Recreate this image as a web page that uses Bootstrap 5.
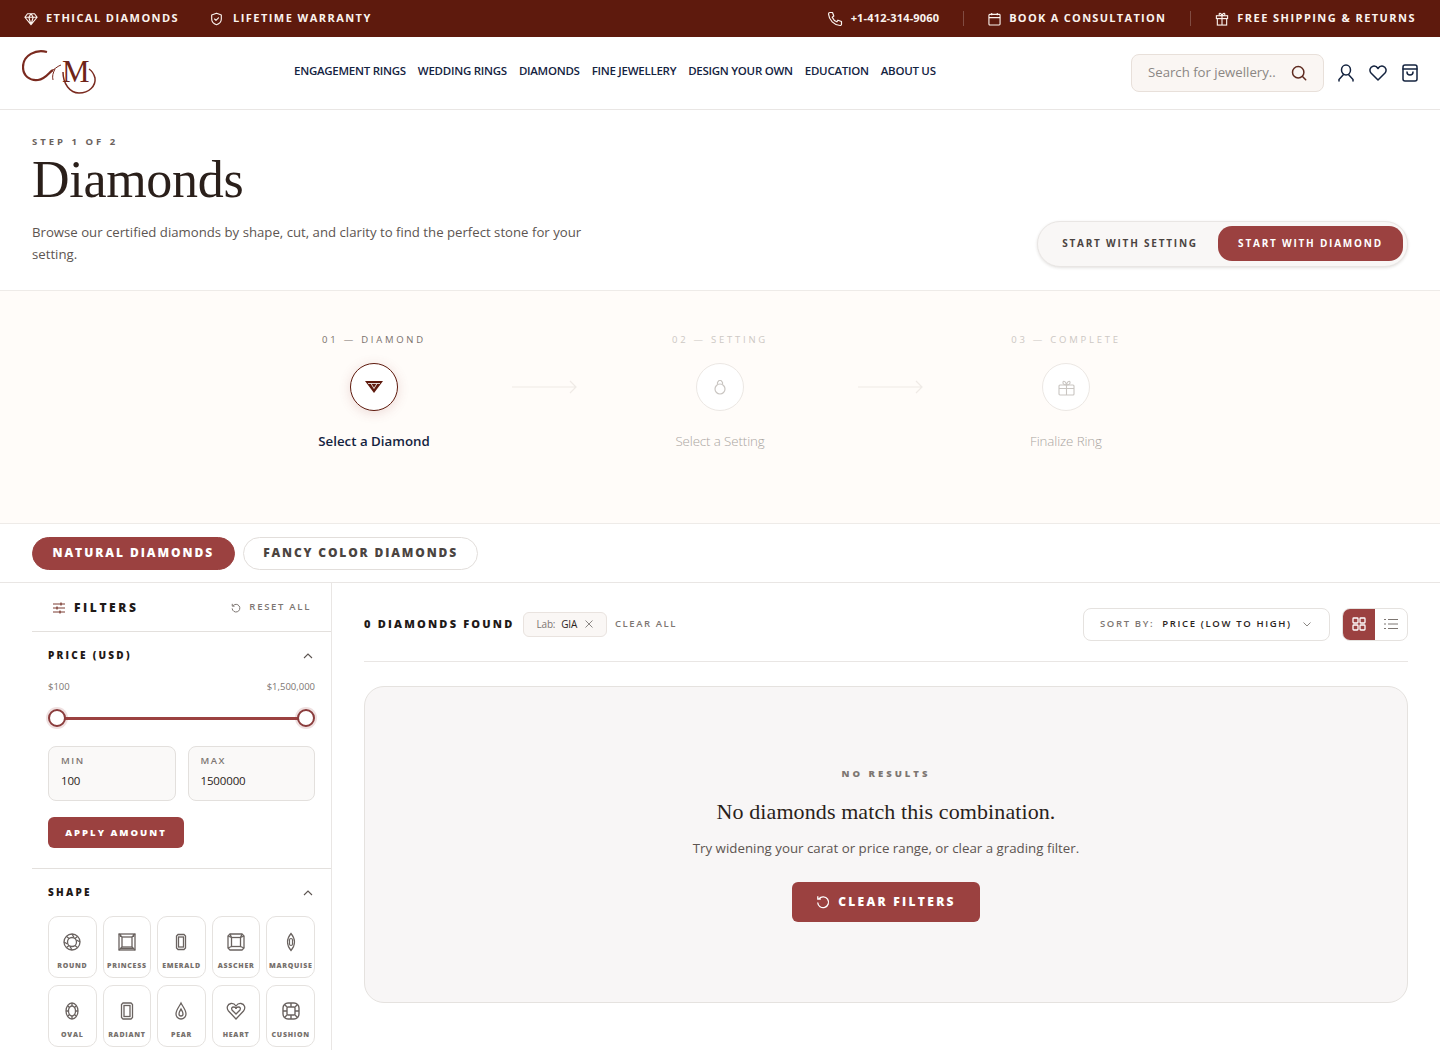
<!DOCTYPE html>
<html lang="en">
<head>
  <meta charset="UTF-8">
  <meta name="viewport" content="width=device-width, initial-scale=1.0">
  <title>Diamonds</title>
  <link href="https://cdn.jsdelivr.net/npm/bootstrap@5.3.0/dist/css/bootstrap.min.css" rel="stylesheet">
  <style>
    body {
      font-family: "Open Sans", "Noto Sans", sans-serif;
      color: #2a2320;
      background: #fff;
      height: 1050px;
      overflow: hidden;
    }
    svg { display: block; flex: none; }
    .top-strip {
      height: 37px;
      background: #5e1a0d;
      color: #fbf3ee;
      padding: 0 24px 0 24px;
      font-size: 11px;
      font-weight: 700;
      letter-spacing: 1.45px;
    }
    .top-strip .strip-phone { font-size: 11px; letter-spacing: .16px; font-weight: 700; }
    .top-strip .strip-book { letter-spacing: 1.3px; }
    .strip-gap { margin-left: 29px; }
    .strip-sep { width: 1px; height: 15px; background: rgba(255,255,255,.22); }
    .site-head {
      height: 73px;
      border-bottom: 1px solid #e9e6e4;
      padding: 0 22px;
    }
    .head-nav {
      left: 294px;
      top: 25px;
      gap: 12px;
    }
    .head-nav a {
      color: #14233f;
      font-size: 11.5px;
      font-weight: 600;
      letter-spacing: -.27px;
      text-decoration: none;
      white-space: nowrap;
    }
    .head-search {
      width: 193px;
      height: 38px;
      background: #faf6f3;
      border: 1px solid #e8e0da;
      border-radius: 8px;
      padding: 0 16px;
      color: #8b8784;
      font-size: 13.2px;
      margin-right: 14px;
    }
    .head-gap { margin-left: 15px; }
    .hero-band { height: 181px; padding: 26px 32px 0; border-bottom: 1px solid #eeebe8; }
    .step-label { font-size: 9.5px; font-weight: 700; letter-spacing: 3px; color: #6b625d; line-height: 12px; }
    .hero-title {
      font-family: "Liberation Serif", serif;
      font-size: 52px;
      font-weight: 400;
      line-height: 60px;
      letter-spacing: -.3px;
      color: #2a1f1a;
      margin: 2px 0 0;
    }
    .hero-copy { width: 570px; font-size: 13.2px; line-height: 22px; color: #5d5551; margin: 11px 0 0; }
    .start-switch {
      right: 32px;
      top: 111px;
      width: 371px;
      height: 46px;
      background: #f9f7f6;
      border: 1px solid #e9e6e4;
      border-radius: 23px;
      box-shadow: 0 1px 3px rgba(60,40,30,.14);
      padding: 0 4px 1px;
      font-size: 10px;
      font-weight: 700;
      letter-spacing: 1.78px;
    }
    .start-switch .switch-off { width: 176px; text-align: center; color: #4b4441; }
    .start-switch .switch-on {
      width: 185px;
      height: 35px;
      line-height: 35px;
      text-align: center;
      background: #9b4140;
      color: #fff;
      border-radius: 14px;
    }
    .stepper-band { height: 233px; background: #fffcf9; border-bottom: 1px solid #eeebe8; padding-top: 43px; }
    .stepper-row { margin-left: 304px; width: 840px; }
    .step-cell { width: 140px; flex: none; text-align: center; }
    .step-num { font-size: 9.5px; letter-spacing: 2.75px; color: #7a716c; line-height: 12px; white-space: nowrap; }
    .step-dot {
      width: 48px;
      height: 48px;
      border-radius: 50%;
      margin: 17px auto 20px;
      border: 1px solid #ece8e4;
      background: #fff;
    }
    .step-name { font-size: 13.3px; line-height: 20px; letter-spacing: -.1px; font-weight: 300; color: #aaa5a1; white-space: nowrap; }
    .step-cell.is-on .step-dot { border-color: #5e1a0d; box-shadow: 0 2px 12px rgba(155,65,64,.18); }
    .step-cell.is-on .step-name { color: #14233f; font-weight: 600; letter-spacing: 0; }
    .step-cell.is-off .step-num { color: #cdc8c4; }
    .step-arrow { width: 206px; flex: none; margin-top: 46px; padding-left: 68px; }
    .tabs-band { height: 59px; border-bottom: 1px solid #e9e6e4; padding: 0 32px; gap: 8px; }
    .pill-tab {
      height: 33px;
      line-height: 30px;
      padding: 0 19.5px;
      border-radius: 17px;
      border: 1px solid #e2dedb;
      font-size: 12px;
      font-weight: 800;
      letter-spacing: 1.95px;
      color: #4b4441;
    }
    .pill-tab.is-on { background: #9b4140; border-color: #9b4140; color: #fff; }
    .pill-tab.pill-fancy { letter-spacing: 1.85px; }
    .filter-col { width: 332px; padding-left: 32px; border-right: 1px solid #e9e6e4; flex: none; height: 468px; overflow: hidden; }
    .filter-head { height: 49px; padding: 1px 20px 0 20px; border-bottom: 1px solid #e3e0dd; }
    .filter-title { font-size: 12px; font-weight: 800; letter-spacing: 2.6px; color: #1f1a18; }
    .filter-reset { font-size: 9.5px; font-weight: 600; letter-spacing: 1.7px; color: #7d7672; }
    .filter-block { padding: 0 16px; border-bottom: 1px solid #e3e0dd; }
    .block-head { padding: 16px 2px 0 0; }
    .block-label { font-size: 10px; font-weight: 800; letter-spacing: 2.25px; color: #1f1a18; }
    .price-ends { font-size: 9.5px; color: #7d7672; margin-top: 17px; line-height: 13px; }
    .range-line { height: 3px; margin: 24px 9px 0; background: #9b4140; }
    .range-knob {
      width: 18px;
      height: 18px;
      border-radius: 50%;
      background: #fff;
      border: 2px solid #8a3c3c;
      box-shadow: 0 0 0 2px rgba(155,65,64,.16);
      top: -8px;
    }
    .range-knob.knob-min { left: -9px; }
    .range-knob.knob-max { right: -9px; }
    .range-pair { margin-top: 26px; gap: 12px; }
    .range-box {
      height: 55px;
      background: #faf9f8;
      border: 1px solid #e3e0dd;
      border-radius: 8px;
      padding: 8px 12px 0;
    }
    .range-box span { display: block; font-size: 9.5px; font-weight: 600; letter-spacing: 1.5px; color: #7d7672; line-height: 12px; }
    .range-box b { display: block; font-weight: 400; font-size: 11.5px; letter-spacing: -.15px; line-height: 18px; margin-top: 5px; color: #2a2320; }
    .apply-btn {
      width: 136px;
      height: 31px;
      line-height: 31px;
      margin: 16px 0 20px;
      text-align: center;
      background: #9b4140;
      color: #fff;
      border-radius: 6px;
      font-size: 9.5px;
      font-weight: 800;
      letter-spacing: 2px;
    }
    .shape-head { margin-bottom: 16px; }
    .shape-grid { display: grid; grid-template-columns: repeat(5, 1fr); gap: 7px 6px; }
    .shape-tile {
      height: 62px;
      border: 1px solid #e5e2df;
      border-radius: 10px;
      background: #fff;
      text-align: center;
      padding-top: 15px;
      overflow: hidden;
    }
    .shape-tile svg { margin: 0 auto; }
    .shape-tile span { display: block; margin-top: 9px; font-size: 7px; font-weight: 800; letter-spacing: .72px; color: #76706c; line-height: 9px; white-space: nowrap; }
    .result-col { padding: 0 32px; }
    .result-bar { height: 79px; padding-top: 4px; border-bottom: 1px solid #e9e6e4; }
    .found-text { font-size: 11px; font-weight: 800; letter-spacing: 2.2px; color: #1f1a18; white-space: nowrap; }
    .lab-chip {
      height: 25px;
      border: 1px solid #e9e3df;
      background: #faf7f5;
      border-radius: 6px;
      padding: 0 13px;
      font-size: 10px;
      letter-spacing: -.2px;
      color: #2a2320;
      margin: 0 8px 0 8px;
    }
    .lab-chip i { font-style: normal; color: #7d7672; margin-right: 6px; }
    .clear-link { font-size: 9.5px; font-weight: 600; letter-spacing: 1.55px; color: #7d7672; }
    .sort-box {
      width: 247px;
      height: 33px;
      border: 1px solid #e5e2df;
      border-radius: 8px;
      padding: 0 18px 0 16px;
      font-size: 9.5px;
      font-weight: 600;
      letter-spacing: 1.65px;
      color: #2a2320;
      white-space: nowrap;
    }
    .sort-box i { font-style: normal; color: #7d7672; margin-right: 8px; }
    .view-switch { width: 66px; height: 33px; border: 1px solid #e5e2df; border-radius: 8px; margin-left: 12px; overflow: hidden; }
    .view-switch div { width: 32px; height: 100%; }
    .view-switch .view-on { background: #9b4140; }
    .empty-box {
      height: 317px;
      margin-top: 24px;
      background: #f8f6f6;
      border: 1px solid #e5e2df;
      border-radius: 20px;
      padding-top: 80px;
      text-align: center;
    }
    .empty-tag { font-size: 9.5px; font-weight: 800; letter-spacing: 3px; color: #7d7672; line-height: 14px; }
    .empty-title { font-family: "Liberation Serif", serif; font-size: 22px; letter-spacing: .1px; line-height: 28px; color: #2a1f1a; font-weight: 400; margin: 17px 0 0; }
    .empty-copy { font-size: 13.3px; line-height: 20px; color: #5d5551; margin: 12px 0 0; }
    .clear-btn {
      width: 188px;
      height: 40px;
      margin: 24px auto 0;
      background: #9b4140;
      color: #fff;
      border-radius: 6px;
      font-size: 12px;
      font-weight: 800;
      letter-spacing: 2.3px;
    }
  </style>
</head>
<body>
  <div class="top-strip d-flex align-items-center justify-content-between">
    <div class="d-flex align-items-center">
      <svg width="14" height="14" viewBox="0 0 16 16" fill="none" stroke="#fbf3ee" stroke-width="1.3" stroke-linejoin="round"><path d="M4 2h8l3 4-7 8.500L1 6zM1 6h14M5.500 6 8 14.500 10.500 6 8 2 5.500 6"/></svg>
      <span class="ms-2">ETHICAL DIAMONDS</span>
      <svg class="strip-gap" width="17" height="14" viewBox="0 0 16 16" fill="none" stroke="#fbf3ee" stroke-width="1.3" stroke-linejoin="round" stroke-linecap="round"><path d="M8 1.500 13.500 3.500V8c0 3.300-2.400 5.500-5.500 6.500C4.900 13.500 2.500 11.300 2.500 8V3.500zM5.800 8l1.600 1.600 2.900-3"/></svg>
      <span class="ms-2">LIFETIME WARRANTY</span>
    </div>
    <div class="d-flex align-items-center">
      <svg width="16" height="16" viewBox="0 0 16 16" fill="none" stroke="#fbf3ee" stroke-width="1.2" stroke-linejoin="round"><path d="M3 1.500 5.500 1.500 6.800 5 5.200 6.200C6 8 7.700 10 9.800 10.800L11 9.200 14.500 10.500V13C14.500 14 13.800 14.600 13 14.500 7 14 2 9 1.500 3 1.500 2.200 2.200 1.500 3 1.500Z"/></svg>
      <span class="strip-phone ms-2">+1-412-314-9060</span>
      <div class="strip-sep mx-4"></div>
      <svg width="13" height="14" viewBox="0 0 14 15" fill="none" stroke="#fbf3ee" stroke-width="1.2"><rect x="1" y="2.500" width="12" height="11.500" rx="1"/><path d="M1 6h12M4 1v2.500M10 1v2.500"/></svg>
      <span class="strip-book ms-2">BOOK A CONSULTATION</span>
      <div class="strip-sep mx-4"></div>
      <svg width="14" height="14" viewBox="0 0 14 15" fill="none" stroke="#fbf3ee" stroke-width="1.2"><rect x="1" y="4" width="12" height="3"/><rect x="2" y="7" width="10" height="7"/><path d="M7 4v10M7 4C5 4 3.500 3 4 1.800 4.600.6 6.500 1.500 7 4ZM7 4c2 0 3.500-1 3-2.200C9.400.6 7.500 1.500 7 4Z"/></svg>
      <span class="ms-2">FREE SHIPPING &amp; RETURNS</span>
    </div>
  </div>

  <div class="site-head d-flex align-items-center justify-content-between position-relative">
    <svg width="76" height="46" viewBox="0 0 76 46" fill="none">
      <path d="M25 2C14 -1 1 5 1 17 1 26 8 31 16 30 24 29 27 22 31 20" stroke="#7a2a1f" stroke-width="2.200"/>
      <path d="M31 20C34 18 36 16 39 15M33 19C31 23 30 26 31 30" stroke="#7a2a1f" stroke-width="1"/>
      <path d="M41 22C41 34 48 43 57 43 67 43 74 36 73 28 72 24 70 21 67 19" stroke="#7a2a1f" stroke-width="1.500"/>
      <text x="40" y="32" font-family="Liberation Serif, serif" font-size="31" fill="#6e2418">M</text>
    </svg>
    <nav class="head-nav d-flex position-absolute">
      <a href="#">ENGAGEMENT RINGS</a><a href="#">WEDDING RINGS</a><a href="#">DIAMONDS</a><a href="#">FINE JEWELLERY</a><a href="#">DESIGN YOUR OWN</a><a href="#">EDUCATION</a><a href="#">ABOUT US</a>
    </nav>
    <div class="d-flex align-items-center">
      <div class="head-search d-flex align-items-center justify-content-between">
        <span>Search for jewellery..</span>
        <svg width="16" height="16" viewBox="0 0 16 16" fill="none" stroke="#5e2a1f" stroke-width="1.500" stroke-linecap="round"><circle cx="7.200" cy="7.200" r="5.700"/><path d="m11.500 11.500 3.200 3.200"/></svg>
      </div>
      <svg width="16" height="18" viewBox="0 0 16 18" fill="none" stroke="#14233f" stroke-width="1.500" stroke-linecap="round"><ellipse cx="8" cy="6" rx="4.500" ry="5"/><path d="M5.500 10.500 1 15.500V17M10.500 10.500 15 15.500V17"/></svg>
      <svg class="head-gap" width="18" height="16" viewBox="0 0 18 16" fill="none" stroke="#14233f" stroke-width="1.500" stroke-linejoin="round"><path d="M9 15 2 8C0 5.500 1 2 4 1.200 6 .8 8 1.800 9 3.500 10 1.800 12 .8 14 1.200 17 2 18 5.500 16 8Z"/></svg>
      <svg class="head-gap" width="16" height="18" viewBox="0 0 16 18" fill="none" stroke="#14233f" stroke-width="1.500" stroke-linecap="round"><rect x="1" y="1" width="14" height="16" rx="2"/><path d="M1 5h14M5 8c0 4 6 4 6 0"/></svg>
    </div>
  </div>

  <div class="hero-band position-relative">
    <div class="step-label">STEP 1 OF 2</div>
    <h1 class="hero-title">Diamonds</h1>
    <p class="hero-copy">Browse our certified diamonds by shape, cut, and clarity to find the perfect stone for your setting.</p>
    <div class="start-switch d-flex align-items-center position-absolute">
      <div class="switch-off">START WITH SETTING</div>
      <div class="switch-on">START WITH DIAMOND</div>
    </div>
  </div>

  <div class="stepper-band">
    <div class="stepper-row d-flex">
      <div class="step-cell is-on">
        <div class="step-num">01 — DIAMOND</div>
        <div class="step-dot d-flex align-items-center justify-content-center">
          <svg width="20" height="14" viewBox="0 0 20 14"><path d="M1 1h18L10 13z" fill="#5e1a0d"/><path d="M4 3.500h12M7 3.500l3 5 3-5" stroke="#fff" stroke-width=".8" fill="none"/></svg>
        </div>
        <div class="step-name">Select a Diamond</div>
      </div>
      <div class="step-arrow">
        <svg width="65" height="14" viewBox="0 0 65 14" fill="none" stroke="#efeae6" stroke-width="1.200"><path d="M0 7h63M58 1l6 6-6 6"/></svg>
      </div>
      <div class="step-cell is-off">
        <div class="step-num">02 — SETTING</div>
        <div class="step-dot d-flex align-items-center justify-content-center">
          <svg width="12" height="16" viewBox="0 0 12 16" fill="none" stroke="#c9c5c1" stroke-width="1.200"><circle cx="6" cy="10" r="5"/><path d="M3.500 5.500V3.500L5 1.500h2l1.500 2v2"/></svg>
        </div>
        <div class="step-name">Select a Setting</div>
      </div>
      <div class="step-arrow">
        <svg width="65" height="14" viewBox="0 0 65 14" fill="none" stroke="#efeae6" stroke-width="1.200"><path d="M0 7h63M58 1l6 6-6 6"/></svg>
      </div>
      <div class="step-cell is-off">
        <div class="step-num">03 — COMPLETE</div>
        <div class="step-dot d-flex align-items-center justify-content-center">
          <svg width="17" height="17" viewBox="0 0 17 17" fill="none" stroke="#c9c5c1" stroke-width="1.100"><rect x="1" y="6" width="15" height="10" rx="1"/><path d="M1 9.500h15M8.500 6v10M8.500 6C6 6 4.500 4.500 5 3 5.800 1.200 8 3 8.500 6ZM8.500 6C11 6 12.500 4.500 12 3 11.200 1.200 9 3 8.500 6Z"/></svg>
        </div>
        <div class="step-name">Finalize Ring</div>
      </div>
    </div>
  </div>

  <div class="tabs-band d-flex align-items-center">
    <div class="pill-tab is-on">NATURAL DIAMONDS</div>
    <div class="pill-tab pill-fancy">FANCY COLOR DIAMONDS</div>
  </div>

  <div class="d-flex">
    <aside class="filter-col">
      <div class="filter-head d-flex align-items-center justify-content-between">
        <div class="d-flex align-items-center">
          <svg width="14" height="12" viewBox="0 0 14 12" fill="none" stroke="#7a3a30" stroke-width="1"><path d="M1 2h12M1 6h12M1 10h12"/><path d="M9 .5v3M5 4.500v3M8 8.500v3" stroke-width="1.300"/></svg>
          <span class="filter-title ms-2">FILTERS</span>
        </div>
        <div class="filter-reset d-flex align-items-center">
          <svg class="me-2" width="10" height="10" viewBox="0 0 12 12" fill="none" stroke="#7d7672" stroke-width="1.200"><path d="M2.500 3.200A4.600 4.600 0 1 1 1.400 6.500M1.500 1v2.800h2.800"/></svg>
          RESET ALL
        </div>
      </div>

      <div class="filter-block">
        <div class="block-head d-flex align-items-center justify-content-between">
          <span class="block-label">PRICE (USD)</span>
          <svg width="10" height="6" viewBox="0 0 10 6" fill="none" stroke="#5d5551" stroke-width="1.100"><path d="m1 5 4-4 4 4"/></svg>
        </div>
        <div class="price-ends d-flex justify-content-between"><span>$100</span><span>$1,500,000</span></div>
        <div class="range-line position-relative">
          <div class="range-knob knob-min position-absolute"></div>
          <div class="range-knob knob-max position-absolute"></div>
        </div>
        <div class="range-pair d-flex">
          <div class="range-box w-50"><span>MIN</span><b>100</b></div>
          <div class="range-box w-50"><span>MAX</span><b>1500000</b></div>
        </div>
        <div class="apply-btn">APPLY AMOUNT</div>
      </div>

      <div class="filter-block border-0">
        <div class="block-head shape-head d-flex align-items-center justify-content-between">
          <span class="block-label">SHAPE</span>
          <svg width="10" height="6" viewBox="0 0 10 6" fill="none" stroke="#5d5551" stroke-width="1.100"><path d="m1 5 4-4 4 4"/></svg>
        </div>
        <div class="shape-grid">
          <div class="shape-tile"><svg width="20" height="20" viewBox="0 0 20 20" fill="none" stroke="#6a6360" stroke-width="1.300"><circle cx="10" cy="10" r="8"/><circle cx="10" cy="10" r="4.500"/><path d="M10 2 12 5.500M18 10 14.500 8M10 18 8 14.500M2 10 5.500 12M4.300 4.300 7 6.500M15.700 4.300 13 6.500M15.700 15.700 13 13.500M4.300 15.700 7 13.500"/></svg><span>ROUND</span></div>
          <div class="shape-tile"><svg width="20" height="20" viewBox="0 0 20 20" fill="none" stroke="#6a6360" stroke-width="1.300"><rect x="2" y="2" width="16" height="16"/><rect x="5" y="5" width="10" height="10"/><path d="M2 2l3 3M18 2l-3 3M2 18l3-3M18 18l-3-3M3.500 2v3M16.500 2v3M3 16.500h14"/></svg><span>PRINCESS</span></div>
          <div class="shape-tile"><svg width="20" height="20" viewBox="0 0 20 20" fill="none" stroke="#6a6360" stroke-width="1.300"><path d="M7 2.500h6l1.500 1.500v12L13 17.500H7L5.500 16V4z"/><rect x="7.500" y="5" width="5" height="10"/></svg><span>EMERALD</span></div>
          <div class="shape-tile"><svg width="20" height="20" viewBox="0 0 20 20" fill="none" stroke="#6a6360" stroke-width="1.300"><path d="M4 2h12l2 2v12l-2 2H4l-2-2V4z"/><rect x="5.500" y="5.500" width="9" height="9"/><path d="M2 4l3.500 1.500M18 4l-3.500 1.500M2 16l3.500-1.500M18 16l-3.500-1.500M4 2 5.500 5.500M16 2l-1.500 3.500"/></svg><span>ASSCHER</span></div>
          <div class="shape-tile"><svg width="20" height="20" viewBox="0 0 20 20" fill="none" stroke="#6a6360" stroke-width="1.200"><path d="M10 1.500C13 5 13.500 7 13.500 10S13 15 10 18.500C7 15 6.500 13 6.500 10S7 5 10 1.500Z"/><rect x="8.500" y="6.500" width="3" height="7" rx="1.500"/></svg><span>MARQUISE</span></div>
          <div class="shape-tile"><svg width="20" height="20" viewBox="0 0 20 20" fill="none" stroke="#6a6360" stroke-width="1.300"><ellipse cx="10" cy="10" rx="6" ry="8"/><ellipse cx="10" cy="10" rx="3.500" ry="5"/><path d="M10 2v3M10 15v3M4 10h2.500M13.500 10H16M6 5l2 2M14 5l-2 2M6 15l2-2M14 15l-2-2"/></svg><span>OVAL</span></div>
          <div class="shape-tile"><svg width="20" height="20" viewBox="0 0 20 20" fill="none" stroke="#6a6360" stroke-width="1.300"><path d="M6 2h8l1.500 1.500v13L14 18H6l-1.500-1.500v-13z"/><rect x="7" y="4.500" width="6" height="11"/></svg><span>RADIANT</span></div>
          <div class="shape-tile"><svg width="20" height="20" viewBox="0 0 20 20" fill="none" stroke="#6a6360" stroke-width="1.300"><path d="M10 2C12 6 15 9 15 13A5 5 0 0 1 5 13C5 9 8 6 10 2Z"/><path d="M10 8c1 2 2 3 2 5a2 2 0 0 1-4 0c0-2 1-3 2-5Z"/></svg><span>PEAR</span></div>
          <div class="shape-tile"><svg width="20" height="20" viewBox="0 0 20 20" fill="none" stroke="#6a6360" stroke-width="1.300"><path d="M10 18 2.500 10C0 7 1.500 3 5 2.500 7.500 2.200 9 3.500 10 5 11 3.500 12.500 2.200 15 2.500 18.500 3 20 7 17.500 10Z"/><path d="M10 13 6 9c-1-1.500 0-3 1.500-3S10 7 10 8c0-1 1-2 2.500-2S15 7.500 14 9Z"/></svg><span>HEART</span></div>
          <div class="shape-tile"><svg width="20" height="20" viewBox="0 0 20 20" fill="none" stroke="#6a6360" stroke-width="1.400"><rect x="2" y="2" width="16" height="16" rx="5"/><rect x="6" y="6" width="8" height="8" rx="1"/><path d="M3.500 3.500 6 6M16.500 3.500 14 6M3.500 16.500 6 14M16.500 16.500 14 14M10 2v4M10 14v4M2 10h4M14 10h4"/></svg><span>CUSHION</span></div>
        </div>
      </div>
    </aside>

    <main class="result-col flex-grow-1">
      <div class="result-bar d-flex align-items-center justify-content-between">
        <div class="d-flex align-items-center">
          <span class="found-text">0 DIAMONDS FOUND</span>
          <div class="lab-chip d-flex align-items-center">
            <i>Lab:</i> GIA
            <svg class="ms-2" width="8" height="8" viewBox="0 0 8 8" stroke="#8b8784" fill="none"><path d="m.5.5 7 7m0-7-7 7"/></svg>
          </div>
          <span class="clear-link">CLEAR ALL</span>
        </div>
        <div class="d-flex align-items-center">
          <div class="sort-box d-flex align-items-center justify-content-between">
            <span><i>SORT BY:</i>PRICE (LOW TO HIGH)</span>
            <svg width="8" height="5" viewBox="0 0 8 5" fill="none" stroke="#8b8784"><path d="m.5.5 3.500 3.500L7.500.5"/></svg>
          </div>
          <div class="view-switch d-flex">
            <div class="view-on d-flex align-items-center justify-content-center">
              <svg width="14" height="14" viewBox="0 0 14 14" fill="none" stroke="#fff" stroke-width="1.300"><rect x="1" y="1" width="5" height="5" rx=".8"/><rect x="8" y="1" width="5" height="5" rx=".8"/><rect x="1" y="8" width="5" height="5" rx=".8"/><rect x="8" y="8" width="5" height="5" rx=".8"/></svg>
            </div>
            <div class="d-flex align-items-center justify-content-center">
              <svg width="14" height="12" viewBox="0 0 14 12" fill="none" stroke="#7d7672" stroke-width="1"><path d="M4 1.500h10M4 6h10M4 10.500h10M0 1.500h2M0 6h2M0 10.500h2"/></svg>
            </div>
          </div>
        </div>
      </div>
      <div class="empty-box">
        <div class="empty-tag">NO RESULTS</div>
        <h2 class="empty-title">No diamonds match this combination.</h2>
        <p class="empty-copy">Try widening your carat or price range, or clear a grading filter.</p>
        <div class="clear-btn d-flex align-items-center justify-content-center">
          <svg class="me-2" width="14" height="14" viewBox="0 0 14 14" fill="none" stroke="#fff" stroke-width="1.300"><path d="M3 3.700A5.400 5.400 0 1 1 1.700 7.500M1.800 1.200v3h3"/></svg>
          CLEAR FILTERS
        </div>
      </div>
    </main>
  </div>

  <script src="https://cdn.jsdelivr.net/npm/bootstrap@5.3.0/dist/js/bootstrap.bundle.min.js"></script>
</body>
</html>
